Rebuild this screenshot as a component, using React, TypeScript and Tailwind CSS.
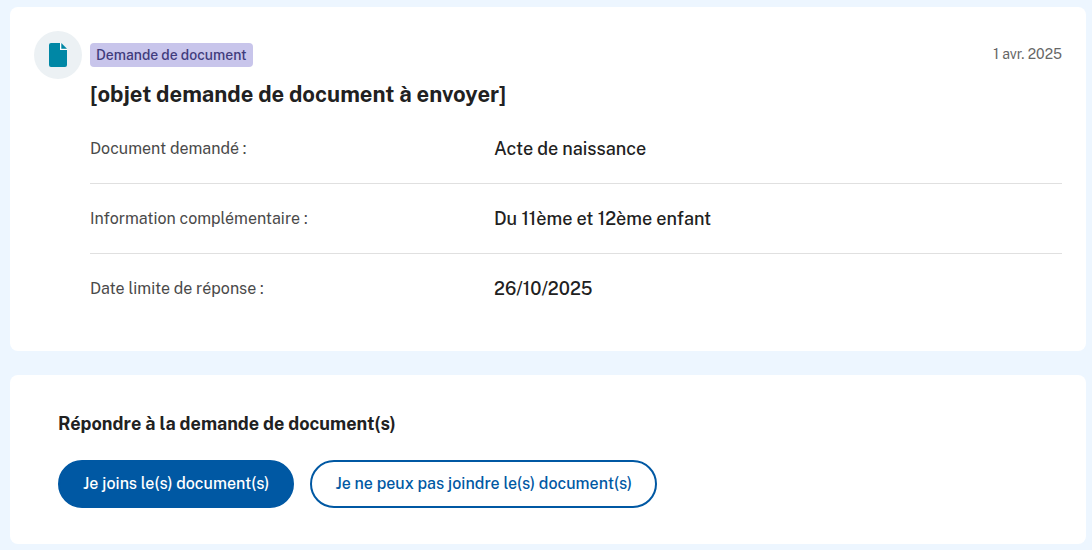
const rows = [
  { label: "Document demandé :", value: "Acte de naissance" },
  { label: "Information complémentaire :", value: "Du 11ème et 12ème enfant" },
  { label: "Date limite de réponse :", value: "26/10/2025" },
];

function DocumentIcon() {
  return (
    <span className="flex size-12 shrink-0 items-center justify-center rounded-full bg-[#ecf1f4]">
      <svg viewBox="0 0 24 24" className="size-6" aria-hidden="true">
        <path d="M5 0h9v7h7v15a2 2 0 0 1-2 2H5a2 2 0 0 1-2-2V2a2 2 0 0 1 2-2z" fill="#0087a5" />
        <path d="M14 0h1v6h6v1h-7z" fill="#fff" />
        <path d="M15.300 0L21 5.700h-5.700z" fill="#0087a5" />
      </svg>
    </span>
  );
}

export default function App() {
  return (
    <main className="flex min-h-screen flex-col gap-6 bg-[#edf6ff] pt-[7px] pr-1.5 pb-1.5 pl-2.5 font-['Public_Sans','Inter',sans-serif] text-[#212121]">
      <article className="flex gap-2 rounded-lg bg-white p-6 pb-7">
        <DocumentIcon />
        <div className="min-w-0 flex-1 pt-3">
          <div className="flex items-start justify-between">
            <span className="rounded bg-[#c8c5eb] px-1.5 text-sm leading-6 font-medium text-[#403b7c]">
              Demande de document
            </span>
            <time dateTime="2025-04-01" className="text-sm leading-[22px] text-[#666666]">1 avr. 2025</time>
          </div>
          <h1 className="mt-3 text-[22px] leading-[30px] font-bold">[objet demande de document à envoyer]</h1>
          <dl className="mt-[5px] divide-y divide-[#e0e0e0]">
            {rows.map((row) => (
              <div key={row.label} className="grid grid-cols-[404px_1fr] py-[22px]">
                <dt className="text-base leading-[25px] text-[#4a4a4a]">{row.label}</dt>
                <dd className="text-lg leading-[25px] font-medium">{row.value}</dd>
              </div>
            ))}
          </dl>
        </div>
      </article>
      <section className="rounded-lg bg-white px-12 pt-[37px] pb-9">
        <h2 className="text-lg leading-6 font-bold">Répondre à la demande de document(s)</h2>
        <div className="mt-6 flex flex-wrap gap-4">
          <button type="button" className="h-12 rounded-full border-2 border-[#0058a3] bg-[#0058a3] px-[23px] text-base font-medium text-white">
            Je joins le(s) document(s)
          </button>
          <button type="button" className="h-12 rounded-full border-2 border-[#0058a3] bg-white px-[23px] text-base font-medium text-[#0058a3]">
            Je ne peux pas joindre le(s) document(s)
          </button>
        </div>
      </section>
    </main>
  );
}
